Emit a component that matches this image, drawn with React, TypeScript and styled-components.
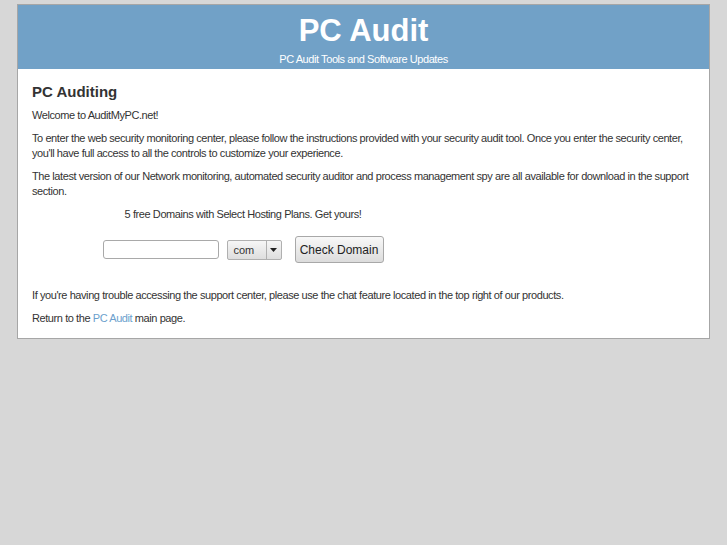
import styled, { createGlobalStyle } from "styled-components";

const GlobalStyle = createGlobalStyle`
  html, body {
    margin: 0;
    padding: 0;
    background: #d7d7d7;
    font-family: "Liberation Sans", Arial, sans-serif;
    color: #333333;
  }
`;

export default function App() {
  return (
    <>
      <GlobalStyle />
      <Page>
        <Header>
          <Title>PC Audit</Title>
          <Tagline>PC Audit Tools and Software Updates</Tagline>
        </Header>
        <Content>
          <Heading>PC Auditing</Heading>
          <Text>Welcome to AuditMyPC.net!</Text>
          <Text>
            To enter the web security monitoring center, please follow the
            instructions provided with your security audit tool. Once you enter
            the security center, you'll have full access to all the controls to
            customize your experience.
          </Text>
          <Text>
            The latest version of our Network monitoring, automated security
            auditor and process management spy are all available for download
            in the support section.
          </Text>
          <Promo>
            <Text>5 free Domains with Select Hosting Plans. Get yours!</Text>
            <DomainForm onSubmit={(e) => e.preventDefault()}>
              <DomainInput type="text" />
              <TldSelect>
                <span className="value">com</span>
                <span className="arrow">
                  <svg width="7" height="4" viewBox="0 0 7 4">
                    <path d="M0 0h7L3.5 4z" fill="#222" />
                  </svg>
                </span>
              </TldSelect>
              <CheckButton type="submit">Check Domain</CheckButton>
            </DomainForm>
          </Promo>
          <Text>
            If you're having trouble accessing the support center, please use
            the chat feature located in the top right of our products.
          </Text>
          <Text>
            Return to the <Link href="#">PC Audit</Link> main page.
          </Text>
        </Content>
      </Page>
    </>
  );
}

const Page = styled.div`
  width: 691px;
  margin: 4px auto 0;
  border: 1px solid #a6a6a6;
  background: #ffffff;
`;

const Header = styled.div`
  background: #71a1c7;
  height: 64px;
  display: flex;
  flex-direction: column;
  align-items: center;
  color: #ffffff;
`;

const Title = styled.h1`
  margin: 8px 0 0;
  font-size: 31px;
  line-height: 36px;
  font-weight: 700;
`;

const Tagline = styled.div`
  margin-top: 3px;
  font-size: 11px;
  line-height: 14px;
  letter-spacing: -0.42px;
`;

const Content = styled.div`
  padding: 14px 14px 4px;
`;

const Heading = styled.h2`
  margin: 0 0 7px;
  font-size: 15px;
  line-height: 17px;
  font-weight: 700;
  color: #333333;
`;

const Text = styled.p`
  margin: 8px 0;
  font-size: 11px;
  line-height: 15px;
  letter-spacing: -0.42px;
  color: #333333;
`;

const Promo = styled.div`
  width: 422px;
  text-align: center;
`;

const DomainForm = styled.form`
  display: flex;
  align-items: center;
  justify-content: center;
  margin: 14px 0 25px;
`;

const DomainInput = styled.input`
  box-sizing: border-box;
  width: 116px;
  height: 19px;
  border: 1px solid #a9a9a9;
  border-radius: 3px;
  background: #ffffff;
  padding: 0 4px;
  outline: none;
`;

const TldSelect = styled.div`
  box-sizing: border-box;
  margin-left: 8px;
  width: 55px;
  height: 20px;
  display: flex;
  border: 1px solid #b0b0b0;
  border-radius: 2px;
  background: linear-gradient(#f6f6f6, #dedede);
  font-size: 11px;
  color: #333333;

  .value {
    flex: 1;
    display: flex;
    align-items: center;
    padding-left: 6px;
  }
  .arrow {
    width: 14px;
    border-left: 1px solid #b0b0b0;
    display: flex;
    align-items: center;
    justify-content: center;
  }
`;

const CheckButton = styled.button`
  box-sizing: border-box;
  margin-left: 13px;
  width: 89px;
  height: 27px;
  border: 1px solid #a8a8a8;
  border-radius: 3px;
  background: linear-gradient(#f8f8f8, #dcdcdc);
  font-family: "Liberation Sans", Arial, sans-serif;
  font-size: 12px;
  color: #222222;
  padding: 0;
`;

const Link = styled.a`
  color: #6c9fcd;
  text-decoration: none;
`;
